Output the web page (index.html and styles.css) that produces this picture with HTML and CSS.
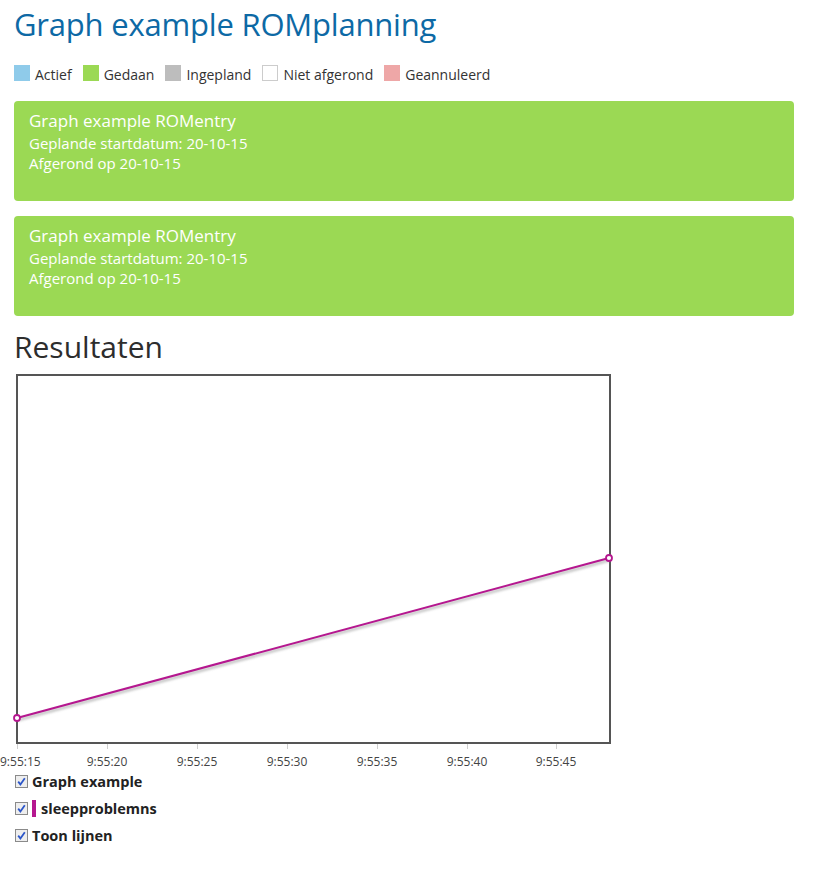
FILE: index.html
```html
<!DOCTYPE html>
<html>
<head>
<meta charset="utf-8">
<link rel="stylesheet" href="styles.css">
</head>
<body>
<div class="page">
  <h1 class="title">Graph example ROMplanning</h1>
  <ul class="legend">
    <li><span class="sw sw-actief"></span>Actief</li>
    <li><span class="sw sw-gedaan"></span>Gedaan</li>
    <li><span class="sw sw-ingepland"></span>Ingepland</li>
    <li><span class="sw sw-niet"></span>Niet afgerond</li>
    <li><span class="sw sw-geannuleerd"></span>Geannuleerd</li>
  </ul>
  <div class="card">
    <div class="card-title">Graph example ROMentry</div>
    <div class="card-line">Geplande startdatum: 20-10-15</div>
    <div class="card-line">Afgerond op 20-10-15</div>
  </div>
  <div class="card">
    <div class="card-title">Graph example ROMentry</div>
    <div class="card-line">Geplande startdatum: 20-10-15</div>
    <div class="card-line">Afgerond op 20-10-15</div>
  </div>
  <h2 class="results">Resultaten</h2>
</div>
<div class="chart">
  <svg width="620" height="402" viewBox="0 0 620 402">
    <defs>
      <filter id="sh" x="-10%" y="-50%" width="120%" height="200%">
        <feGaussianBlur stdDeviation="1.2"/>
      </filter>
    </defs>
    <rect x="17" y="5" width="593" height="368" fill="#fff" stroke="#555" stroke-width="2"/>
    <g stroke="#cfcfcf" stroke-width="1">
      <line x1="17.5" y1="374" x2="17.5" y2="379"/>
      <line x1="107.5" y1="374" x2="107.5" y2="379"/>
      <line x1="197.5" y1="374" x2="197.5" y2="379"/>
      <line x1="287.5" y1="374" x2="287.5" y2="379"/>
      <line x1="377.5" y1="374" x2="377.5" y2="379"/>
      <line x1="467.5" y1="374" x2="467.5" y2="379"/>
      <line x1="556.5" y1="374" x2="556.5" y2="379"/>
    </g>
    <g class="tick-label" text-anchor="middle">
      <text x="0" y="396" text-anchor="start">9:55:15</text>
      <text x="107" y="396">9:55:20</text>
      <text x="197" y="396">9:55:25</text>
      <text x="287" y="396">9:55:30</text>
      <text x="377" y="396">9:55:35</text>
      <text x="467" y="396">9:55:40</text>
      <text x="556" y="396">9:55:45</text>
    </g>
    <line x1="18" y1="350" x2="610" y2="190" stroke="#888" stroke-opacity="0.45" stroke-width="3" filter="url(#sh)"/>
    <line x1="17" y1="348" x2="609" y2="188" stroke="#b5178f" stroke-width="2"/>
    <circle cx="17" cy="348" r="3" fill="#fff" stroke="#b5178f" stroke-width="1.8"/>
    <circle cx="609" cy="188" r="3" fill="#fff" stroke="#b5178f" stroke-width="1.8"/>
  </svg>
</div>
<div class="series">
  <label class="row">
    <svg class="cb" width="13" height="13" viewBox="0 0 13 13"><rect x="0.5" y="0.5" width="12" height="12" fill="#eeeeee" stroke="#8a8a8a"/><path d="M3.2 6.6 L5.4 9.4 L9.8 3.2" fill="none" stroke="#2c56c9" stroke-width="1.8"/></svg>
    <span>Graph example</span>
  </label>
  <label class="row">
    <svg class="cb" width="13" height="13" viewBox="0 0 13 13"><rect x="0.5" y="0.5" width="12" height="12" fill="#eeeeee" stroke="#8a8a8a"/><path d="M3.2 6.6 L5.4 9.4 L9.8 3.2" fill="none" stroke="#2c56c9" stroke-width="1.8"/></svg>
    <span class="bar"></span><span>sleepproblemns</span>
  </label>
  <label class="row">
    <svg class="cb" width="13" height="13" viewBox="0 0 13 13"><rect x="0.5" y="0.5" width="12" height="12" fill="#eeeeee" stroke="#8a8a8a"/><path d="M3.2 6.6 L5.4 9.4 L9.8 3.2" fill="none" stroke="#2c56c9" stroke-width="1.8"/></svg>
    <span>Toon lijnen</span>
  </label>
</div>
</body>
</html>
```
FILE: styles.css
```css
html, body {
  margin: 0;
  padding: 0;
  background: #fff;
}
body {
  font-family: "Open Sans", "Noto Sans", sans-serif;
  color: #333;
}
.page {
  padding: 0 20px 0 14px;
}
.title {
  margin: 0;
  padding-top: 4px;
  font-size: 31px;
  font-weight: 500;
  color: #0d69a5;
  line-height: 40px;
  letter-spacing: -0.2px;
}
.legend {
  list-style: none;
  margin: 22px 0 0 0;
  padding: 0;
  display: flex;
  gap: 11px;
  font-size: 14px;
  color: #333;
  line-height: 18px;
}
.legend li {
  display: flex;
  align-items: center;
}
.sw {
  display: inline-block;
  width: 16px;
  height: 16px;
  margin-right: 5px;
  box-sizing: border-box;
  position: relative;
  top: -2px;
}
.sw-actief { background: #8fcbea; }
.sw-gedaan { background: #9bd954; }
.sw-ingepland { background: #bdbdbd; }
.sw-niet { background: #fff; border: 1px solid #ccc; }
.sw-geannuleerd { background: #eea7a7; }
.card {
  background: #9bd954;
  border-radius: 4px;
  height: 100px;
  box-sizing: border-box;
  padding: 8px 15px;
  color: #fff;
  margin-top: 17px;
}
.card + .card {
  margin-top: 15px;
}
.card-title {
  font-size: 17px;
  line-height: 24px;
}
.card-line {
  font-size: 15px;
  line-height: 20px;
}
.results {
  margin: 13px 0 0 0;
  font-size: 30px;
  font-weight: 400;
  line-height: 36px;
  color: #2d2d2d;
}
.chart {
  margin-top: 5px;
  height: 402px;
}
.chart svg {
  display: block;
}
.tick-label {
  font-family: "Open Sans", sans-serif;
  font-size: 12px;
  fill: #444;
}
.series {
  padding-left: 15px;
  margin-top: 0;
  display: flex;
  flex-direction: column;
  gap: 8px;
}
.row {
  display: flex;
  align-items: center;
  font-size: 14.5px;
  font-weight: 700;
  color: #222;
  height: 19px;
}
.cb {
  display: block;
  margin-right: 4px;
  flex: none;
}
.bar {
  display: inline-block;
  width: 4px;
  height: 17px;
  background: #b5178f;
  margin-right: 5px;
}
```
